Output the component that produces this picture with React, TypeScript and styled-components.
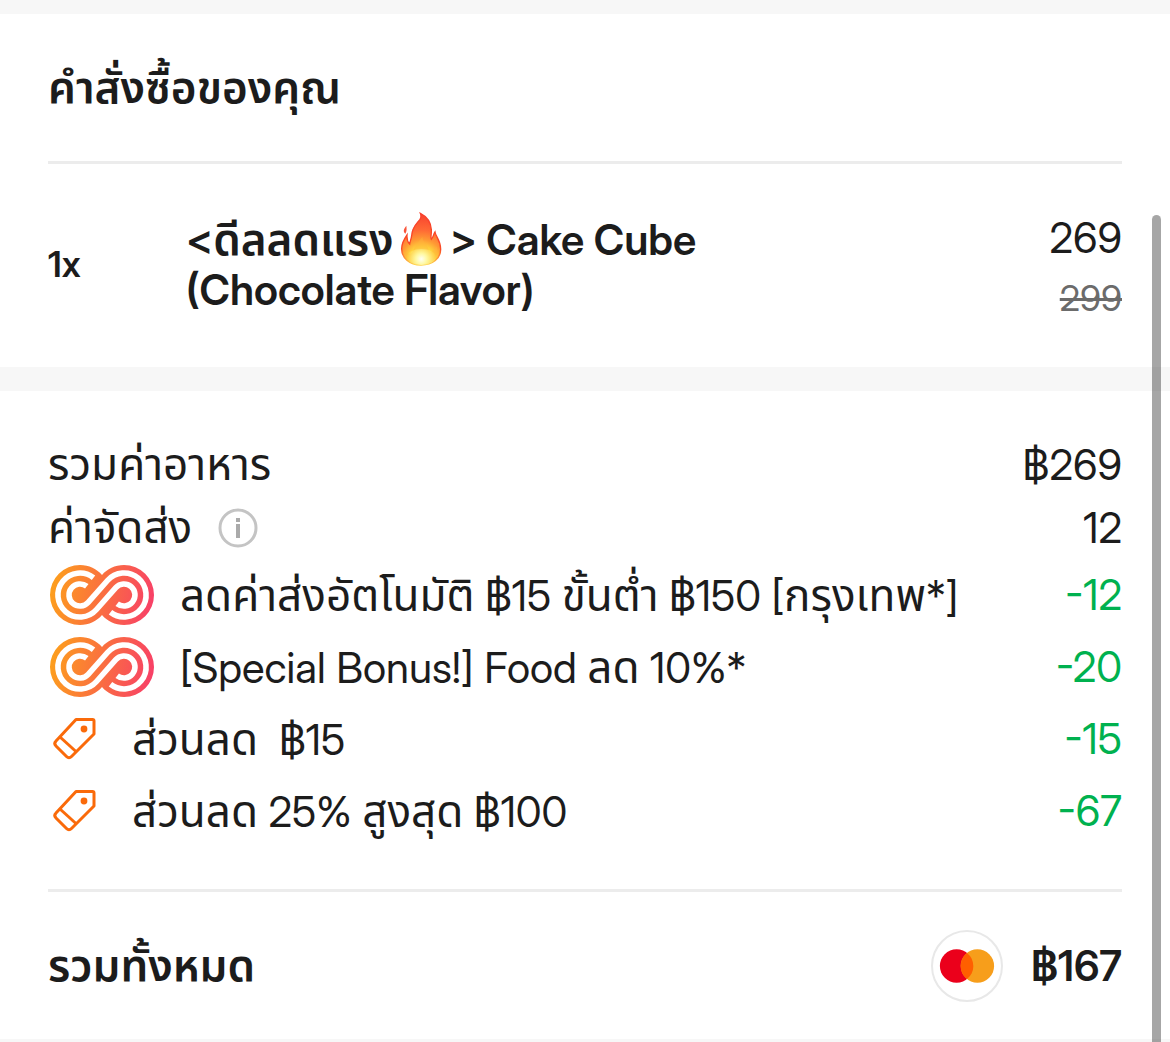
import React, { useId } from "react";
import styled, { createGlobalStyle } from "styled-components";

const GlobalStyle = createGlobalStyle`
  *, *::before, *::after { box-sizing: border-box; }
  body {
    margin: 0;
    background: #ffffff;
    color: #1c1c1c;
    font-family: "Inter Display", Inter, "Noto Sans Thai", "Noto Sans", sans-serif;
  }
  h2, p, dl, dt, dd { margin: 0; }
`;

const Sheet = styled.main`
  position: relative;
  border-top: 14px solid #f7f7f7;
  border-bottom: 3px solid #f7f7f7;
`;

const Section = styled.section`
  padding: 0 48px;
`;

const Band = styled.div`
  height: 24px;
  background: #f7f7f7;
`;

const Title = styled.h2`
  padding: 43px 0 44px;
  font-size: 44px;
  line-height: 60px;
  font-weight: 600;
`;

const Item = styled.article`
  display: grid;
  grid-template-columns: 138px minmax(0, 520px) 1fr;
  align-items: center;
  padding: 36px 0 39px;
  border-top: 3px solid #ececec;
`;

const Quantity = styled.span`
  font-size: 36px;
  line-height: 50px;
  font-weight: 600;
`;

const ItemName = styled.p`
  font-size: 42px;
  line-height: 50px;
  font-weight: 600;
`;

const Prices = styled.div`
  display: flex;
  flex-direction: column;
  padding-top: 8px;
  text-align: right;
  line-height: 60px;
`;

const Price = styled.span`
  font-size: 42px;
`;

const OldPrice = styled.s`
  font-size: 36px;
  color: #6b6b6b;
`;

const Summary = styled.dl`
  padding: 42px 0;
`;

const Line = styled.div<{ $tall?: boolean }>`
  display: flex;
  align-items: center;
  justify-content: space-between;
  height: ${(p) => (p.$tall ? 72 : 63)}px;
  font-size: 42px;
  line-height: 60px;
`;

const Label = styled.dt`
  display: flex;
  align-items: center;
  gap: 26px;
  white-space: pre-wrap;
`;

const Amount = styled.dd<{ $saving?: boolean }>`
  color: ${(p) => (p.$saving ? "#00b14f" : "inherit")};
`;

/* Thai letters are set slightly larger than the Latin ones beside them. */
const Thai = styled.span`
  font-size: 44px;
`;

const InfoButton = styled.button`
  display: flex;
  padding: 0;
  border: 0;
  background: none;
  cursor: pointer;
`;

const Total = styled.div`
  display: flex;
  align-items: center;
  justify-content: space-between;
  height: 150px;
  border-top: 3px solid #ececec;
  font-size: 42px;
  line-height: 60px;
  font-weight: 600;
`;

const Payment = styled.div`
  display: flex;
  align-items: center;
  gap: 28px;
`;

const CardBadge = styled.span`
  display: flex;
  align-items: center;
  justify-content: center;
  width: 72px;
  height: 72px;
  border: 2px solid #e8e8e8;
  border-radius: 50%;
`;

const FlameSvg = styled.svg`
  width: 54px;
  height: 62px;
  margin: -6px 1px;
  vertical-align: bottom;
`;

const ScrollThumb = styled.div`
  position: absolute;
  top: 201px;
  right: 9px;
  bottom: -3px;
  width: 9px;
  border-radius: 5px 5px 0 0;
  background: rgba(0, 0, 0, 0.35);
`;

function Text({ children }: { children: string }) {
  return (
    <span>
      {children
        .split(/([\u0E01-\u0E3A\u0E40-\u0E5B]+)/)
        .filter(Boolean)
        .map((part, i) =>
          /[\u0E01-\u0E3A]/.test(part) ? (
            <Thai lang="th" key={i}>
              {part}
            </Thai>
          ) : (
            part
          )
        )}
    </span>
  );
}

function Flame() {
  return (
    <FlameSvg viewBox="0 0 162 186" role="img" aria-label="🔥">
      <defs>
        <radialGradient id="flame" gradientUnits="userSpaceOnUse" cx="80" cy="156" r="140">
          <stop offset="0" stopColor="#fffef0" />
          <stop offset="0.14" stopColor="#fff59a" />
          <stop offset="0.3" stopColor="#ffd23c" />
          <stop offset="0.46" stopColor="#ff9a34" />
          <stop offset="0.66" stopColor="#ff6a35" />
          <stop offset="1" stopColor="#f8432f" />
        </radialGradient>
        <linearGradient id="rim" x1="0" y1="0" x2="0" y2="1">
          <stop offset="0" stopColor="#f8402c" />
          <stop offset="0.7" stopColor="#fa4a24" />
          <stop offset="1" stopColor="#ffd24a" />
        </linearGradient>
        <radialGradient id="core" gradientUnits="userSpaceOnUse" cx="79" cy="150" r="48">
          <stop offset="0" stopColor="#fffff4" />
          <stop offset="0.35" stopColor="#fff8a0" />
          <stop offset="1" stopColor="#ffe24a" stopOpacity="0" />
        </radialGradient>
      </defs>
      <path
        fill="url(#flame)"
        stroke="url(#rim)"
        strokeWidth="4"
        d="M78 168C42 168 20 146 20 119C20 102 27 91 36 78C35 92 38 99 44 105C45 96 49 90 50 80C51 55 66 43 75 31C79 25 78 18 76 13C96 23 108 42 109 62C110 75 106 83 109 91C115 85 115 76 120 69C122 84 137 93 137 121C137 148 114 168 78 168Z"
      />
      <path
        fill="#ffb43c"
        fillOpacity="0.4"
        d="M79 167C48 167 30 151 27 128C41 137 50 136 53 128C60 111 70 99 82 83C84 103 98 105 101 124C104 132 112 130 125 112C134 146 110 167 79 167Z"
      />
      <ellipse cx="79" cy="144" rx="44" ry="24" fill="url(#core)" />
      <path fill="#f9543a" d="M34 50C35 60 36 65 31 74C25 68 24 62 34 50Z" />
    </FlameSvg>
  );
}

function UnlimitedLogo() {
  const id = useId();
  return (
    <svg width="106" height="60" viewBox="-2 0 106 60" aria-hidden="true">
      <defs>
        <linearGradient id={id} gradientUnits="userSpaceOnUse" x1="0" y1="20" x2="104" y2="40">
          <stop offset="0" stopColor="#fda01c" />
          <stop offset="0.5" stopColor="#fa6f40" />
          <stop offset="1" stopColor="#f83f68" />
        </linearGradient>
      </defs>
      <path fill={`url(#${id})`} d="M30 0C39 0 47 4 52 10C57 4 65 0 74 0A30 30 0 0 1 74 60C65 60 57 56 52 50C47 56 39 60 30 60A30 30 0 0 1 30 0Z" />
      <g fill="none" stroke="#ffffff" strokeWidth="5.6">
        <path d="M43.5 12.7A22 22 0 1 0 46.5 44.5L65.8 22.7A11 11 0 1 1 67.2 38.7" />
        <path d="M36.8 21.3A11 11 0 1 0 38.2 37.3L57.5 15.5A22 22 0 1 1 60.5 47.3" />
      </g>
    </svg>
  );
}

function TagIcon() {
  return (
    <svg width="58" height="52" viewBox="0 0 58 52" fill="none" stroke="#fa6a0a" strokeWidth="3" strokeLinejoin="round" aria-hidden="true">
      <path d="M28 6.500H44.500Q46 6.500 46 8V21L23.500 43.500Q21 46 18.500 43.500L8 33Q5.500 30.500 8 28Z" />
      <path d="M12 24L28.500 39" />
      <circle cx="36" cy="16" r="3.400" fill="#fa6a0a" stroke="none" />
    </svg>
  );
}

function InfoIcon() {
  return (
    <svg width="40" height="40" viewBox="0 0 40 40" aria-hidden="true">
      <circle cx="20" cy="20" r="18" fill="none" stroke="#c4c4c4" strokeWidth="3" />
      <path d="M18 10h4v4h-4zM18 16h4v14h-4z" fill="#aaaaaa" />
    </svg>
  );
}

function Mastercard() {
  return (
    <svg width="56" height="36" viewBox="0 0 56 36" role="img" aria-label="Mastercard">
      <circle cx="17.6" cy="18" r="16.7" fill="#eb001b" />
      <circle cx="38.4" cy="18" r="16.7" fill="#f79e1b" />
      <path d="M28 4.9A16.7 16.7 0 0 1 28 31.1A16.7 16.7 0 0 1 28 4.9Z" fill="#ff5f00" />
    </svg>
  );
}

const discounts = [
  { icon: "logo", label: "ลดค่าส่งอัตโนมัติ ฿15 ขั้นต่ำ ฿150 [กรุงเทพ*]", amount: "-12" },
  { icon: "logo", label: "[Special Bonus!] Food ลด 10%*", amount: "-20" },
  { icon: "tag", label: "ส่วนลด  ฿15", amount: "-15" },
  { icon: "tag", label: "ส่วนลด 25% สูงสุด ฿100", amount: "-67" },
];

export default function App() {
  return (
    <>
      <GlobalStyle />
      <Sheet>
        <Section>
          <Title>คำสั่งซื้อของคุณ</Title>
          <Item>
            <Quantity>1x</Quantity>
            <ItemName>
              <Text>{"<ดีลลดแรง"}</Text>
              <Flame />
              {"> Cake Cube (Chocolate Flavor)"}
            </ItemName>
            <Prices>
              <Price>269</Price>
              <OldPrice>299</OldPrice>
            </Prices>
          </Item>
        </Section>
        <Band />
        <Section>
          <Summary>
            <Line>
              <Label>
                <Text>รวมค่าอาหาร</Text>
              </Label>
              <Amount>฿269</Amount>
            </Line>
            <Line>
              <Label>
                <Text>ค่าจัดส่ง</Text>
                <InfoButton type="button" aria-label="ค่าจัดส่ง">
                  <InfoIcon />
                </InfoButton>
              </Label>
              <Amount>12</Amount>
            </Line>
            {discounts.map((d) => (
              <Line $tall key={d.label}>
                <Label>
                  {d.icon === "logo" ? <UnlimitedLogo /> : <TagIcon />}
                  <Text>{d.label}</Text>
                </Label>
                <Amount $saving>{d.amount}</Amount>
              </Line>
            ))}
          </Summary>
          <Total>
            <Text>รวมทั้งหมด</Text>
            <Payment>
              <CardBadge>
                <Mastercard />
              </CardBadge>
              <span>฿167</span>
            </Payment>
          </Total>
        </Section>
        <ScrollThumb />
      </Sheet>
    </>
  );
}
